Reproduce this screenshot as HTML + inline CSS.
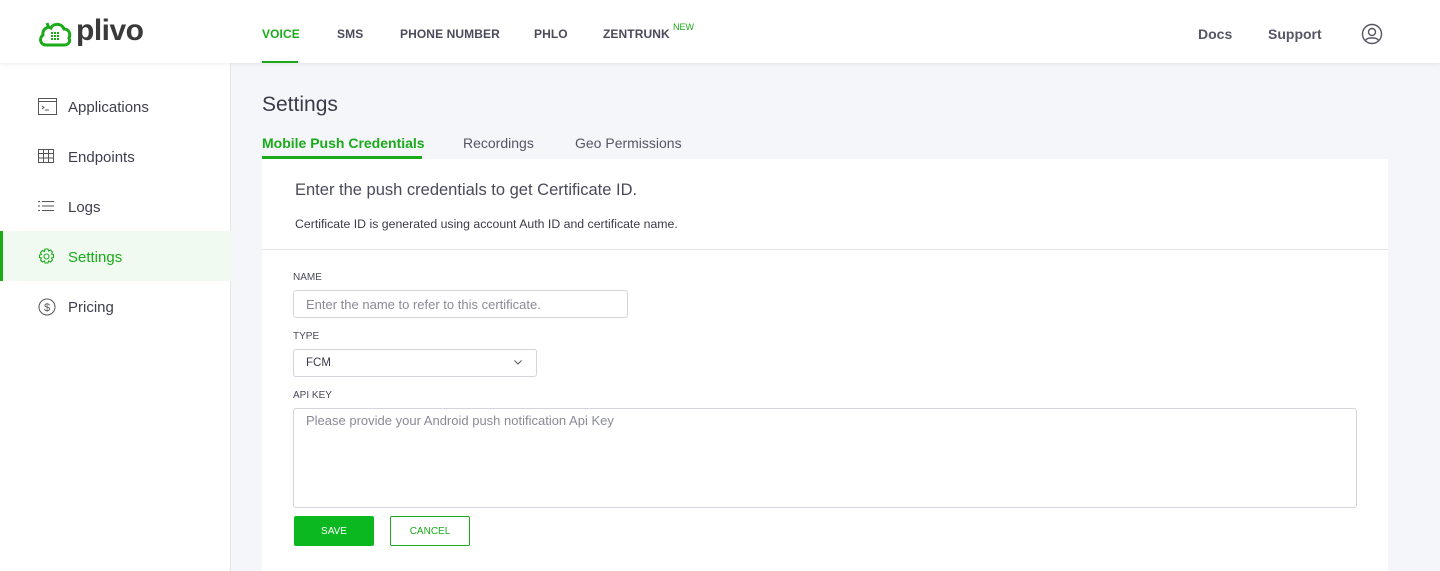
<!DOCTYPE html>
<html><head><meta charset="utf-8"><style>
*{box-sizing:border-box;margin:0;padding:0}
body{width:1440px;height:571px;overflow:hidden;background:#f5f6fa;font-family:"Liberation Sans",sans-serif;color:#4a4a5a;position:relative}
.hdr{position:absolute;left:0;top:0;width:1440px;height:63px;background:#fff;box-shadow:0 1px 4px rgba(0,0,0,.08);z-index:2}
.nav{position:absolute;top:27px;font-size:12px;font-weight:bold;color:#4a4a5a;letter-spacing:.1px}
.side{position:absolute;left:0;top:63px;width:231px;height:508px;background:#fff;border-right:1px solid #e6e6ea}
.si{position:absolute;left:0;width:231px;height:50px;font-size:15px;color:#3e3e4e}
.si span{position:absolute;left:68px;top:18px}
.si svg{position:absolute;left:38px;top:17px}
.card{position:absolute;left:262px;top:159px;width:1126px;height:412px;background:#fff}
.lbl{position:absolute;left:31px;font-size:10px;color:#4a4a5a}
.inp{position:absolute;left:31px;border:1px solid #d4d4dc;border-radius:3px;background:#fff;font-size:13px;color:#8a8a96}
</style></head><body>
<div class="hdr">
<svg style="position:absolute;left:38px;top:20px" width="34" height="28" viewBox="0 0 34 28"><path d="M8 25 C2 25 1 18 5 15 C4 9 10 6 13 8 C15 3 24 3 26 9 C31 9 33 14 31 18 C33 22 30 25 26 25 Z" fill="none" stroke="#1aaa1a" stroke-width="3"/><path d="M9 3 L11 8" stroke="#1aaa1a" stroke-width="3"/><g fill="#1aaa1a"><rect x="13" y="12" width="2" height="2"/><rect x="16" y="12" width="2" height="2"/><rect x="19" y="12" width="2" height="2"/><rect x="13" y="15" width="2" height="2"/><rect x="16" y="15" width="2" height="2"/><rect x="19" y="15" width="2" height="2"/><rect x="13" y="18" width="2" height="2"/><rect x="16" y="18" width="2" height="2"/><rect x="19" y="18" width="2" height="2"/></g></svg>
<div style="position:absolute;left:76px;top:14px;font-size:30px;font-weight:bold;color:#3a3a3a;letter-spacing:-.5px">plivo</div>
<div class="nav" style="left:262px;color:#1aaa1a">VOICE</div>
<div style="position:absolute;left:262px;top:61px;width:36px;height:2px;background:#1aaa1a"></div>
<div class="nav" style="left:337px">SMS</div>
<div class="nav" style="left:400px">PHONE NUMBER</div>
<div class="nav" style="left:534px">PHLO</div>
<div class="nav" style="left:603px">ZENTRUNK</div>
<div style="position:absolute;left:673px;top:22px;font-size:9px;color:#1aaa1a">NEW</div>
<div style="position:absolute;left:1198px;top:26px;font-size:14px;font-weight:bold;color:#555566">Docs</div>
<div style="position:absolute;left:1268px;top:26px;font-size:14px;font-weight:bold;color:#555566">Support</div>
<svg style="position:absolute;left:1361px;top:23px" width="22" height="22" viewBox="0 0 22 22" fill="none" stroke="#555566" stroke-width="1.4"><circle cx="11" cy="11" r="9.5"/><circle cx="11" cy="9" r="3.5"/><path d="M4.5 17.5 C6 14 16 14 17.5 17.5"/></svg>
</div>
<div class="side">
<div class="si" style="top:18px"><svg width="20" height="18" viewBox="0 0 20 18" fill="none" stroke="#555" stroke-width="1"><rect x=".5" y=".5" width="18" height="16"/><path d="M.5 3.5h18M4 8l2 1.5L4 11M7 12h4"/></svg><span>Applications</span></div>
<div class="si" style="top:68px"><svg width="16" height="16" viewBox="0 0 16 16" fill="none" stroke="#555" stroke-width="1"><rect x=".5" y="1.5" width="15" height="13"/><path d="M.5 5.5h15M.5 10h15M5.5 1.5v13M10.5 1.5v13"/></svg><span>Endpoints</span></div>
<div class="si" style="top:118px"><svg width="16" height="16" viewBox="0 0 16 16" fill="none" stroke="#555" stroke-width="1"><path d="M0 3.5h2M4 3.5h12M0 8h2M4 8h12M0 12.5h2M4 12.5h12"/></svg><span>Logs</span></div>
<div class="si" style="top:168px;background:#f0faf0;border-left:3px solid #1aaa1a"><svg style="left:35px" width="17" height="17" viewBox="0 0 17 17" fill="none" stroke="#1aaa1a" stroke-width="1.1"><circle cx="8.5" cy="8.5" r="2.5"/><path d="M7 1h3l.5 2 2-1 2 2-1 2 2 .5v3l-2 .5 1 2-2 2-2-1-.5 2H7l-.5-2-2 1-2-2 1-2-2-.5V7l2-.5-1-2 2-2 2 1z"/></svg><span style="left:65px;color:#1aaa1a">Settings</span></div>
<div class="si" style="top:218px"><svg width="18" height="18" viewBox="0 0 18 18" fill="none" stroke="#555" stroke-width="1"><circle cx="9" cy="9" r="8"/><text x="9" y="13" font-size="11" text-anchor="middle" fill="#555" stroke="none" font-family="Liberation Sans">$</text></svg><span>Pricing</span></div>
</div>
<div style="position:absolute;left:262px;top:93px;font-size:21px;color:#3a3a4a">Settings</div>
<div style="position:absolute;left:262px;top:135px;font-size:14px;font-weight:bold;color:#1aaa1a">Mobile Push Credentials</div>
<div style="position:absolute;left:262px;top:156px;width:160px;height:3px;background:#1aaa1a"></div>
<div style="position:absolute;left:463px;top:135px;font-size:14px;color:#555566">Recordings</div>
<div style="position:absolute;left:575px;top:135px;font-size:14px;color:#555566">Geo Permissions</div>
<div class="card">
<div style="position:absolute;left:33px;top:22px;font-size:16.5px;color:#4a4a5a">Enter the push credentials to get Certificate ID.</div>
<div style="position:absolute;left:33px;top:58px;font-size:12.3px;color:#3a3a4a">Certificate ID is generated using account Auth ID and certificate name.</div>
<div style="position:absolute;left:0;top:90px;width:1126px;height:1px;background:#e6e6ea"></div>
<div class="lbl" style="top:113px">NAME</div>
<div class="inp" style="top:131px;width:335px;height:28px;padding:6px 12px">Enter the name to refer to this certificate.</div>
<div class="lbl" style="top:172px">TYPE</div>
<div class="inp" style="top:190px;width:244px;height:28px;padding:7px 12px;color:#3a3a4a;font-size:11.5px">FCM<svg style="position:absolute;right:14px;top:10px" width="8" height="5" viewBox="0 0 8 5" fill="none" stroke="#555" stroke-width="1"><path d="M.5.5L4 4 7.5.5"/></svg></div>
<div class="lbl" style="top:231px">API KEY</div>
<div class="inp" style="top:249px;width:1064px;height:100px;padding:4px 12px">Please provide your Android push notification Api Key</div>
<div style="position:absolute;left:32px;top:357px;width:80px;height:30px;background:#0bb81f;border-radius:2px;color:#fff;font-size:10px;text-align:center;line-height:32px">SAVE</div>
<div style="position:absolute;left:128px;top:357px;width:80px;height:30px;border:1px solid #1aaa1a;border-radius:2px;color:#1aaa1a;font-size:10px;text-align:center;line-height:30px">CANCEL</div>
</div>
</body></html>
